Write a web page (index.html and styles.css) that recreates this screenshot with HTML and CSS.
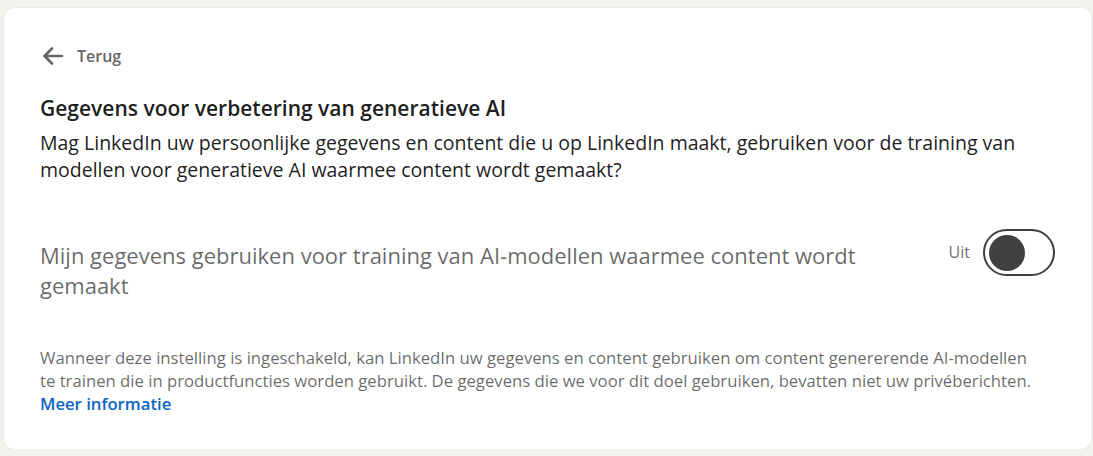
FILE: index.html
```html
<!DOCTYPE html>
<html lang="nl">
<head>
<meta charset="utf-8">
<link rel="stylesheet" href="styles.css">
</head>
<body>
<div class="card">
  <a class="back" href="#">
    <svg class="back-icon" width="22" height="24" viewBox="0 0 22 24"><path d="M20 12H3.5M10 4.5L2.5 12l7.5 7.5" fill="none" stroke="currentColor" stroke-width="2.6" stroke-linecap="round" stroke-linejoin="round"/></svg>
    <span>Terug</span>
  </a>
  <h1 class="title">Gegevens voor verbetering van generatieve AI</h1>
  <p class="desc">Mag LinkedIn uw persoonlijke gegevens en content die u op LinkedIn maakt, gebruiken voor de training van modellen voor generatieve AI waarmee content wordt gemaakt?</p>
  <div class="setting">
    <div class="setting-label">Mijn gegevens gebruiken voor training van AI-modellen waarmee content wordt gemaakt</div>
    <div class="toggle-wrap">
      <span class="toggle-text">Uit</span>
      <span class="toggle"><span class="knob"></span></span>
    </div>
  </div>
  <p class="note">Wanneer deze instelling is ingeschakeld, kan LinkedIn uw gegevens en content gebruiken om content genererende AI-modellen te trainen die in productfuncties worden gebruikt. De gegevens die we voor dit doel gebruiken, bevatten niet uw privéberichten. <a class="link" href="#">Meer informatie</a></p>
</div>
</body>
</html>
```
FILE: styles.css
```css
html, body {
  margin: 0;
  padding: 0;
  background: #f3f2ef;
}
body {
  padding: 8px 2px 0 4px;
  font-family: "Open Sans", "Noto Sans", sans-serif;
}
.card {
  background: #fff;
  border-radius: 10px;
  height: 441px;
  box-sizing: border-box;
  padding: 36px 36px 0 36px;
  box-shadow: 0 0 0 1px rgba(0,0,0,0.03);
}
.back {
  display: flex;
  align-items: center;
  gap: 13px;
  color: #666;
  text-decoration: none;
  font-size: 16px;
  font-weight: 600;
  height: 24px;
  line-height: 24px;
}
.back-icon {
  color: #666;
  margin-left: 2px;
}
.title {
  margin: 26px 0 0 0;
  font-size: 21px;
  font-weight: 600;
  color: rgba(0,0,0,0.9);
  line-height: 28px;
}
.desc {
  margin: 7px 0 0 0;
  font-size: 19.5px;
  line-height: 27px;
  color: rgba(0,0,0,0.9);
}
.setting {
  display: flex;
  justify-content: space-between;
  align-items: flex-start;
  margin-top: 57px;
}
.setting-label {
  width: 860px;
  font-size: 22px;
  line-height: 30px;
  color: rgba(0,0,0,0.6);
}
.toggle-wrap {
  display: flex;
  align-items: flex-start;
  gap: 13px;
  margin-top: -11px;
}
.toggle-text {
  font-size: 16px;
  line-height: 23px;
  color: rgba(0,0,0,0.6);
  margin-top: 12px;
}
.toggle {
  width: 72px;
  height: 47px;
  box-sizing: border-box;
  border: 2px solid #404040;
  border-radius: 24px;
  display: flex;
  align-items: center;
  padding-left: 4px;
}
.knob {
  width: 36px;
  height: 36px;
  border-radius: 50%;
  background: #404040;
}
.note {
  margin: 45.5px 0 0 0;
  max-width: 1000px;
  font-size: 16.7px;
  line-height: 23px;
  color: rgba(0,0,0,0.6);
}
.link {
  display: block;
  color: #0a66c2;
  font-weight: 600;
  text-decoration: none;
}
```
